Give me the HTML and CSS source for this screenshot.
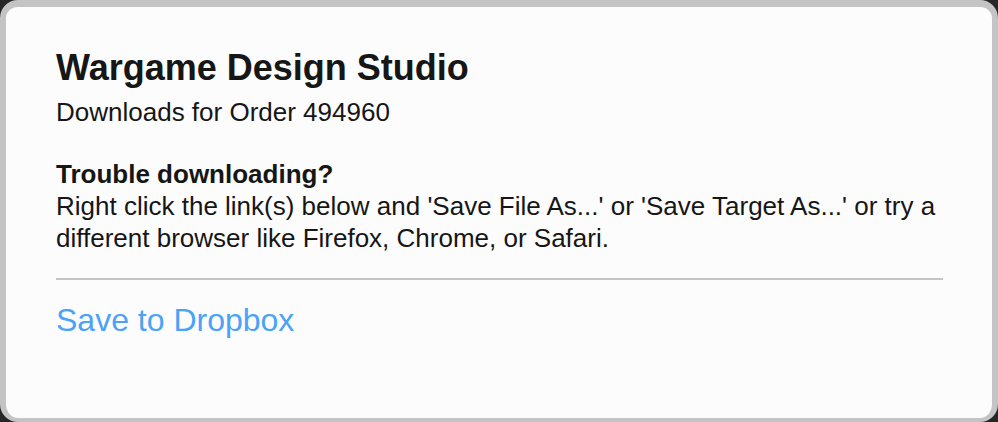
FILE: index.html
```html
<!DOCTYPE html>
<html lang="en">
<head>
    <meta charset="UTF-8">
    <title>Downloads</title>
    <link rel="stylesheet" href="styles.css">
</head>
<body>
    <div class="frame">
        <div class="panel">
            <h1 class="studio">Wargame Design Studio</h1>
            <p class="order">Downloads for Order 494960</p>
            <div class="help">
                <h2>Trouble downloading?</h2>
                <p>Right click the link(s) below and 'Save File As...' or 'Save Target As...' or try a different browser like Firefox, Chrome, or Safari.</p>
            </div>
            <hr class="rule">
            <a class="dropbox" href="javascript:;">Save to Dropbox</a>
        </div>
    </div>
</body>
</html>
```

FILE: styles.css
```css
* { padding: 0; margin: 0; box-sizing: border-box; }

body { background: #262626; font-family: "Liberation Sans", Arial, sans-serif; color: #161616; }

.frame { height: 422px; border-style: solid; border-color: #c4c4c4; border-width: 7px 6px 4px 6px; border-radius: 18px; background: #fcfcfc; }

.panel { padding: 41px 49px 0 50px; }

.studio { font-size: 36px; line-height: 40px; font-weight: bold; }
.order { font-size: 26px; line-height: 32px; margin-top: 8px; }

.help { margin-top: 30px; font-size: 26px; line-height: 32px; }
.help h2 { font-size: 26px; line-height: 32px; font-weight: bold; }

.rule { border: none; height: 2px; background: #c4c4c4; margin-top: 24px; }

.dropbox { display: inline-block; margin-top: 22px; font-size: 32px; line-height: 36px; color: #4aa3f6; text-decoration: none; }
```
